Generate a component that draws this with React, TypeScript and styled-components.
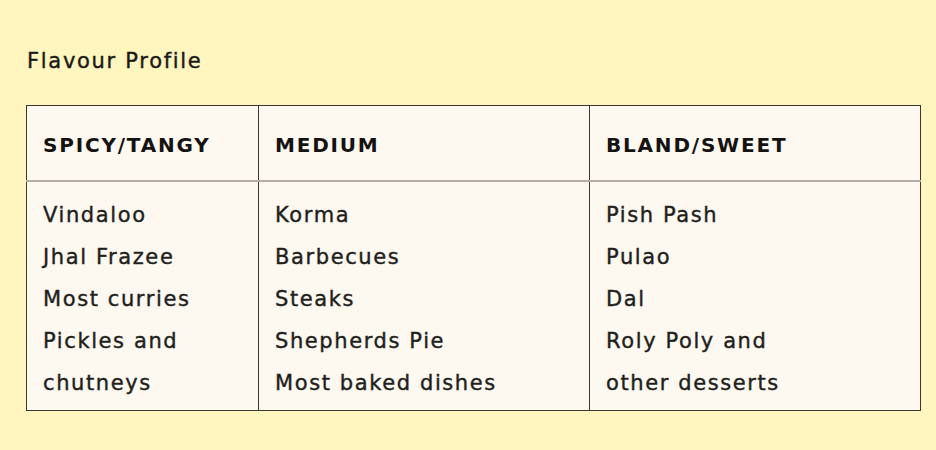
import styled, { createGlobalStyle } from 'styled-components'

const GlobalStyle = createGlobalStyle`
  html, body {
    margin: 0;
    padding: 0;
    background: #fff5be;
  }
  body {
    font-family: 'DejaVu Sans', 'Noto Sans', sans-serif;
    color: #1f1d1b;
  }
`

type Column = {
  title: string
  width: number
  items: string[]
}

const columns: Column[] = [
  {
    title: 'SPICY/TANGY',
    width: 232,
    items: ['Vindaloo', 'Jhal Frazee', 'Most curries', 'Pickles and chutneys'],
  },
  {
    title: 'MEDIUM',
    width: 331,
    items: ['Korma', 'Barbecues', 'Steaks', 'Shepherds Pie', 'Most baked dishes'],
  },
  {
    title: 'BLAND/SWEET',
    width: 331,
    items: ['Pish Pash', 'Pulao', 'Dal', 'Roly Poly and other desserts'],
  },
]

const Page = styled.div`
  padding: 45px 16px 40px 26px;
`

const Title = styled.h2`
  margin: 0 0 28px 1px;
  font-size: 21px;
  font-weight: 400;
  letter-spacing: 1.7px;
  line-height: 32px;
  color: #1c1a18;
  -webkit-text-stroke: 0.4px #1c1a18;
`

const Table = styled.table`
  width: 894px;
  border-collapse: collapse;
  background: #fdf8f0;
  border: 1px solid #3b3631;
  table-layout: fixed;
`

const HeadCell = styled.th<{ $width: number }>`
  box-sizing: border-box;
  width: ${(p) => p.$width}px;
  height: 75px;
  padding: 5px 16px 0;
  text-align: left;
  font-size: 20px;
  font-weight: 700;
  letter-spacing: 1.8px;
  color: #151311;
  border-left: 1px solid #3b3631;
  border-bottom: 2px solid #b3ada6;
  vertical-align: middle;
`

const BodyCell = styled.td`
  padding: 12px 16px 6px;
  vertical-align: top;
  border-left: 1px solid #3b3631;
`

const ItemList = styled.ul`
  margin: 0;
  padding: 0;
  list-style: none;
`

const Item = styled.li`
  max-width: 226px;
  font-size: 21px;
  font-weight: 400;
  letter-spacing: 1.6px;
  line-height: 42px;
  color: #221f1c;
  -webkit-text-stroke: 0.4px #221f1c;
`

const App = () => {
  return (
    <>
      <GlobalStyle />
      <Page>
        <Title>Flavour Profile</Title>
        <Table>
          <thead>
            <tr>
              {columns.map((col) => (
                <HeadCell key={col.title} $width={col.width}>
                  {col.title}
                </HeadCell>
              ))}
            </tr>
          </thead>
          <tbody>
            <tr>
              {columns.map((col) => (
                <BodyCell key={col.title}>
                  <ItemList>
                    {col.items.map((item) => (
                      <Item key={item}>{item}</Item>
                    ))}
                  </ItemList>
                </BodyCell>
              ))}
            </tr>
          </tbody>
        </Table>
      </Page>
    </>
  )
}

export default App
